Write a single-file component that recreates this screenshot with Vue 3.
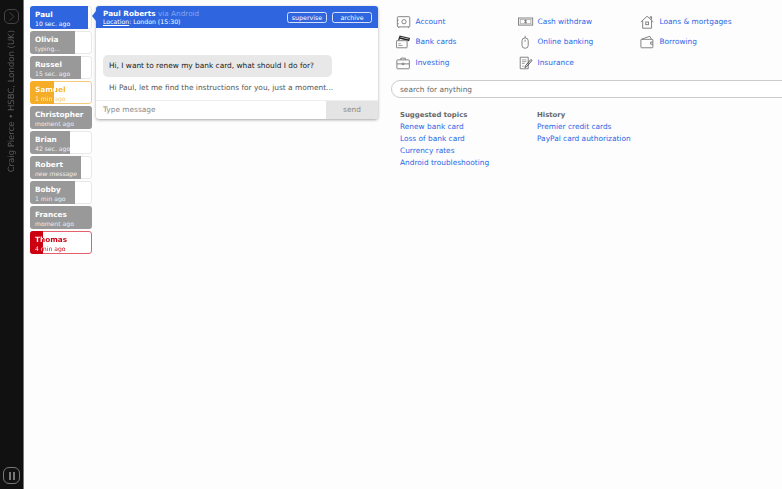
<script setup>
const people = [
  { name: 'Paul', time: '10 sec. ago', pct: 94, kind: 'active' },
  { name: 'Olivia', time: 'typing...', pct: 72, kind: 'grey' },
  { name: 'Russel', time: '15 sec. ago', pct: 82, kind: 'grey' },
  { name: 'Samuel', time: '1 min ago', pct: 39, kind: 'orange' },
  { name: 'Christopher', time: 'moment ago', pct: 100, kind: 'grey' },
  { name: 'Brian', time: '42 sec. ago', pct: 65, kind: 'grey' },
  { name: 'Robert', time: 'new message', pct: 82, kind: 'grey', italic: true },
  { name: 'Bobby', time: '1 min ago', pct: 72, kind: 'grey' },
  { name: 'Frances', time: 'moment ago', pct: 100, kind: 'grey' },
  { name: 'Thomas', time: '4 min ago', pct: 21, kind: 'red' }
]
const services = [
  { label: 'Account', icon: 'safe' },
  { label: 'Cash withdraw', icon: 'cash' },
  { label: 'Loans & mortgages', icon: 'house' },
  { label: 'Bank cards', icon: 'cards' },
  { label: 'Online banking', icon: 'mouse' },
  { label: 'Borrowing', icon: 'wallet' },
  { label: 'Investing', icon: 'case' },
  { label: 'Insurance', icon: 'doc' }
]
const topics = ['Renew bank card', 'Loss of bank card', 'Currency rates', 'Android troubleshooting']
const history = ['Premier credit cards', 'PayPal card authorization']
</script>

<template>
  <div class="page">
    <aside class="side">
      <div class="round"><svg width="11" height="11" viewBox="0 0 12 12"><path d="M4 1.5 8.5 6 4 10.5" fill="none" stroke="#4a4a4a" stroke-width="1" /></svg></div>
      <div class="agent"><span>Craig Pierce • HSBC, London (UK)</span></div>
      <div class="round pause"><i></i><i></i></div>
    </aside>

    <nav class="rail">
      <div v-for="p in people" :key="p.name" class="person" :class="p.kind">
        <div class="fill" :class="{ full: p.pct === 100 }" :style="{ width: p.pct * 0.62 + 'px' }"></div>
        <b>{{ p.name }}</b>
        <span :class="{ it: p.italic }">{{ p.time }}</span>
      </div>
    </nav>

    <section class="chat">
      <span class="notch"></span>
      <header class="chat-head">
        <div class="who">
          <div><b>Paul Roberts</b> <span class="via">via Android</span></div>
          <div class="loc"><u>Location</u>: London (15:30)</div>
        </div>
        <button class="hbtn sup">supervise</button>
        <button class="hbtn arc">archive</button>
      </header>
      <div class="msgs">
        <div class="bubble">Hi, I want to renew my bank card, what should I do for?</div>
        <div class="reply">Hi Paul, let me find the instructions for you, just a moment...</div>
      </div>
      <div class="compose">
        <div class="type">Type message</div>
        <div class="send">send</div>
      </div>
    </section>

    <main class="help">
      <div class="grid">
        <a v-for="s in services" :key="s.label" class="svc">
          <span class="ico">
            <svg width="16" height="16" viewBox="0 0 18 16" fill="none" stroke="#777" stroke-width="1">
              <template v-if="s.icon === 'safe'"><rect x="1.5" y="2" width="14" height="11.5" rx="1" /><circle cx="9" cy="7.7" r="2.4" /><path d="M3 13.5v1.2M14 13.5v1.2M1.5 6h1.5M1.5 10h1.5" /></template>
              <template v-else-if="s.icon === 'cash'"><rect x="0.5" y="3.5" width="16" height="8" /><rect x="2.5" y="5" width="12" height="5" stroke="#aaa" /><path d="M8.5 5.5v4M7 6.5h3M7 8.5h3" /></template>
              <template v-else-if="s.icon === 'house'"><path d="M1 8 8 1.5 15 8" /><path d="M3 6.5V15h10V6.5" /><rect x="6.5" y="8" width="3" height="3" /><path d="M11.5 4V2h1.5v3.5" /></template>
              <template v-else-if="s.icon === 'cards'"><path d="M3 6 4.5 1.5 15 4 14 7" stroke="#333" stroke-width="1.4" /><path d="M4 3.5l10.5 2.5" stroke="#222" stroke-width="1.6" /><rect x="0.5" y="6.5" width="12" height="8" rx="0.5" /><path d="M2.5 10h3M2.5 12h5" stroke="#999" /></template>
              <template v-else-if="s.icon === 'mouse'"><rect x="4.5" y="3.5" width="7" height="11.5" rx="3.2" /><path d="M8 3.5V1M8 5.5v2.2" /></template>
              <template v-else-if="s.icon === 'wallet'"><path d="M1.5 5 11 1.5 13 5" /><rect x="1" y="5" width="13.5" height="9.5" rx="0.8" /><path d="M14.5 8h-2.5v2.5h2.5" /></template>
              <template v-else-if="s.icon === 'case'"><rect x="1" y="4.5" width="14" height="10" rx="0.8" /><path d="M5.5 4.5V2.5h5v2M1 9h6M9 9h6M7 8.2h2v1.6H7z" /></template>
              <template v-else><path d="M2.5 1.5h9v13h-9z" /><path d="M4.5 4.5h5M4.5 6.5h5M4.5 8.5h3M4.5 11.5h2" stroke="#999" /><path d="M14.5 4 8.5 11l-.8 2 2-.8 6-7z" stroke="#444" /></template>
            </svg>
          </span>
          {{ s.label }}
        </a>
      </div>

      <div class="search">search for anything</div>

      <div class="lists">
        <div class="col first">
          <h4>Suggested topics</h4>
          <a v-for="t in topics" :key="t">{{ t }}</a>
        </div>
        <div class="col">
          <h4>History</h4>
          <a v-for="t in history" :key="t">{{ t }}</a>
        </div>
      </div>
    </main>
  </div>
</template>

<style>
html, body { margin: 0; padding: 0; background: #fdfdfd; overflow: hidden; }
</style>

<style scoped>
.page {
  display: flex;
  width: 782px;
  height: 489px;
  overflow: hidden;
  background: #fdfdfd;
  font-family: "DejaVu Sans", Verdana, sans-serif;
  font-size: 7.4px;
  line-height: 10px;
  color: #333;
  text-rendering: geometricPrecision;
}
.side {
  flex: 0 0 24px;
  height: 489px;
  box-sizing: border-box;
  background: #111;
  border-right: 1px solid #777;
  display: flex;
  flex-direction: column;
  align-items: center;
  padding: 9px 0 5px;
}
.round {
  width: 15px;
  height: 15px;
  box-sizing: border-box;
  border: 1.5px solid #444;
  border-radius: 5px;
  display: flex;
  align-items: center;
  justify-content: center;
  gap: 2px;
}
.pause { border-color: #777; border-radius: 6px; width: 17px; height: 17px; }
.pause i { width: 2px; height: 8px; background: #777; }
.agent {
  flex: 1;
  display: flex;
  align-items: flex-start;
  justify-content: center;
  padding-top: 6px;
}
.agent span {
  writing-mode: vertical-rl;
  transform: rotate(180deg);
  color: #5a5a5a;
  white-space: nowrap;
  font-size: 8.5px;
  line-height: 10px;
}
.rail {
  flex: 0 0 62px;
  min-width: 0;
  margin-left: 6px;
  padding-top: 6px;
  display: flex;
  flex-direction: column;
  gap: 2px;
}
.person {
  position: relative;
  height: 23px;
  box-sizing: border-box;
  padding: 2.5px 0 0 4px;
  border: 1px solid #e8e8e8;
  border-radius: 3px;
  background: #fff;
  white-space: nowrap;
}
.person b, .person span { position: relative; display: block; }
.person b { font-size: 7.3px; line-height: 9px; }
.person span { font-size: 6.1px; line-height: 9px; margin-top: 1px; }
.person .it { font-style: italic; }
.fill { position: absolute; left: -1px; top: -1px; bottom: -1px; border-radius: 3px 0 0 3px; }
.fill.full { border-radius: 3px; }
.grey { color: #fff; }
.grey .fill { background: #999; }
.grey span { color: #eee; }
.active { color: #fff; }
.active .fill { background: #2f66e0; }
.orange { border-color: #f7cd7c; color: #fff; }
.orange .fill { background: #f5ac27; }
.orange b { background: linear-gradient(90deg, #fff 0 20px, #f5ac27 20px); -webkit-background-clip: text; background-clip: text; color: transparent; }
.orange span { background: linear-gradient(90deg, #fff 0 20px, #f5c25e 20px); -webkit-background-clip: text; background-clip: text; color: transparent; }
.red { border-color: #e4606c; }
.red .fill { background: #cc0011; }
.red b { background: linear-gradient(90deg, #fff 0 8px, #cc0011 8px); -webkit-background-clip: text; background-clip: text; color: transparent; }
.red span { background: linear-gradient(90deg, #fff 0 8px, #cc0011 8px); -webkit-background-clip: text; background-clip: text; color: transparent; }
.chat {
  position: relative;
  flex: 0 0 282px;
  height: 113px;
  margin: 6px 0 0 4px;
  background: #fff;
  border-radius: 3px;
  box-shadow: 0 1px 3px rgba(0, 0, 0, 0.35);
  display: flex;
  flex-direction: column;
}
.notch {
  position: absolute;
  left: -4px;
  top: 5px;
  width: 0;
  height: 0;
  border: 5px solid transparent;
  border-left: 0;
  border-right: 4px solid #2f66e0;
}
.chat-head {
  height: 22px;
  flex: none;
  box-sizing: border-box;
  padding: 3px 6px 0 7px;
  background: #2f66e0;
  border-radius: 3px 3px 0 0;
  display: flex;
  align-items: flex-start;
  color: #fff;
}
.who { flex: 1; white-space: nowrap; }
.who b { font-size: 7.3px; }
.via { color: #83a5ee; font-size: 7.3px; }
.loc { font-size: 6.2px; line-height: 8px; }
.hbtn {
  font: inherit;
  font-size: 6.3px;
  line-height: 8px;
  height: 11px;
  margin-top: 3px;
  padding: 0;
  color: #fff;
  background: transparent;
  border: 1px solid #d5e0f8;
  border-radius: 2.5px;
}
.sup { width: 40px; margin-right: 5px; }
.arc { width: 40px; }
.msgs {
  flex: 1;
  padding-top: 27px;
}
.bubble {
  margin-left: 7px;
  width: 229px;
  box-sizing: border-box;
  height: 22px;
  padding: 0 6px;
  line-height: 21px;
  background: #e8e8e8;
  border-radius: 5px;
  color: #222;
  white-space: nowrap;
}
.reply { margin: 5px 0 0 13px; line-height: 11px; color: #555; white-space: nowrap; }
.compose {
  height: 19px;
  flex: none;
  display: flex;
  border-top: 1px solid #eee;
  box-sizing: border-box;
  line-height: 18px;
}
.type { flex: 1; padding-left: 7px; color: #888; }
.send { width: 52px; text-align: center; background: #e4e4e4; color: #888; border-radius: 0 0 3px 0; }
.help {
  flex: none;
  width: 391px;
  margin-left: 13px;
}
.grid {
  display: grid;
  grid-template-columns: 122px 122px 1fr;
  grid-auto-rows: 20.5px;
  padding: 11.5px 0 0 5px;
}
.svc {
  display: flex;
  align-items: center;
  color: #2a66e8;
  white-space: nowrap;
}
.ico { flex: 0 0 19.5px; height: 16px; display: block; }
.ico svg { display: block; }
.search {
  margin-top: 7px;
  height: 18px;
  width: 420px;
  box-sizing: border-box;
  padding-left: 8px;
  line-height: 17px;
  color: #666;
  background: #fff;
  border: 1px solid #ccc;
  border-radius: 9px;
}
.lists {
  display: flex;
  padding: 11.5px 0 0 9px;
}
.col { display: flex; flex-direction: column; }
.first { width: 137px; }
.col h4 { margin: 0 0 1px; font-size: 6.9px; line-height: 10px; color: #666; }
.col a { color: #2a66e8; line-height: 12px; white-space: nowrap; }
</style>
